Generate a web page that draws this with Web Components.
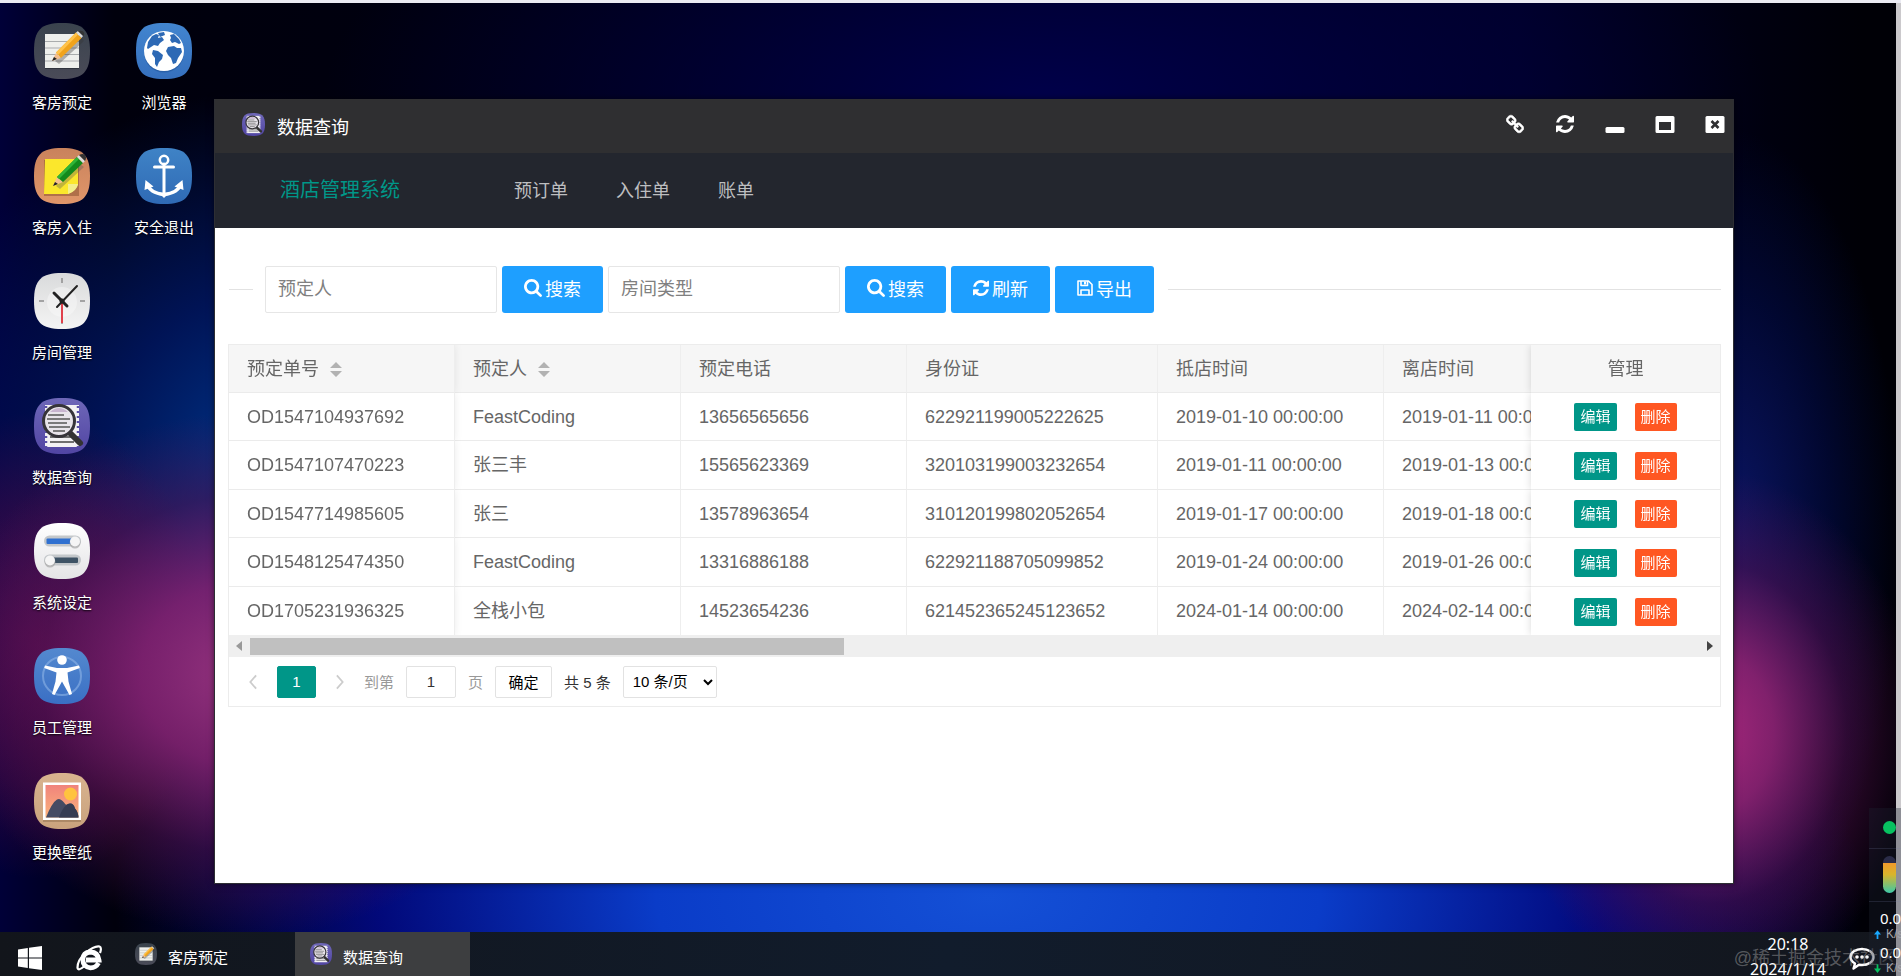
<!DOCTYPE html>
<html lang="zh-CN">
<head>
<meta charset="utf-8">
<title>数据查询</title>
<style>
  html, body {
    height: 100%;
    margin: 0;
  }

  body {
    overflow: hidden;
    font-family: "Liberation Sans", "Noto Sans CJK SC", sans-serif;
    font-size: 15px;
  }
</style>
</head>
<body>
<desk-top>
  <desk-shortcut icon="notes">客房预定</desk-shortcut>
  <desk-shortcut icon="sticky">客房入住</desk-shortcut>
  <desk-shortcut icon="clock">房间管理</desk-shortcut>
  <desk-shortcut icon="query">数据查询</desk-shortcut>
  <desk-shortcut icon="switches">系统设定</desk-shortcut>
  <desk-shortcut icon="person">员工管理</desk-shortcut>
  <desk-shortcut icon="picture">更换壁纸</desk-shortcut>
  <desk-shortcut icon="globe">浏览器</desk-shortcut>
  <desk-shortcut icon="anchor">安全退出</desk-shortcut>

  <desk-window slot="windows" icon="query" caption="数据查询">
    <hotel-nav brand="酒店管理系统">
      <a href="#booking">预订单</a>
      <a href="#checkin">入住单</a>
      <a href="#bill">账单</a>
    </hotel-nav>
    <search-bar></search-bar>
    <order-table></order-table>
  </desk-window>

  <task-bar slot="taskbar">
    <task-item icon="notes">客房预定</task-item>
    <task-item icon="query" active>数据查询</task-item>
  </task-bar>
  <net-meter slot="overlay"></net-meter>
</desk-top>

<script>
// Rounded tile shared by all desktop icons.
const TILE = 'M28 0C49 0 56 7 56 28S49 56 28 56 0 49 0 28 7 0 28 0z';

const ICONS = {
  notes: ['0 0 56 56', `
    <defs><linearGradient id="g" x2="0" y2="1"><stop stop-color="#3a434d"/><stop offset="1" stop-color="#4a4b58"/></linearGradient></defs>
    <path d="${TILE}" fill="url(#g)"/>
    <path d="M11 12h34v34H11z" fill="#1c1f26" opacity=".5"/>
    <path d="M11 11h34v34H11z" fill="#eeefec"/>
    <path d="M11 18.500h34M11 25h34M11 31.500h34M11 38h34" stroke="#a9acad" stroke-width="1.200"/>
    <path d="M21 38l26-24 3 4-25 23z" fill="#333" opacity=".35"/>
    <path d="M18 38l4-8 5 5z" fill="#f3bd8e"/><path d="M18 38l2-4 3 2z" fill="#222"/>
    <path d="M22 29.500L42 9.500l5.500 5.500L27 35z" fill="#f0a31c"/>
    <path d="M22 29.500L42 9.500l2 2L24 32z" fill="#ffc24a"/>
    <path d="M42 9.500l2-1.500 5 5-1.500 2z" fill="#ddd"/><path d="M44 8q4-1 5.500 1t0 4z" fill="#333"/>`],
  sticky: ['0 0 56 56', `
    <defs><linearGradient id="g" x2="0" y2="1"><stop stop-color="#c9825c"/><stop offset="1" stop-color="#e0966a"/></linearGradient></defs>
    <path d="${TILE}" fill="url(#g)"/>
    <path d="M10 12h35v36H10z" fill="#6f3d1f" opacity=".4"/>
    <path d="M11 11h33v26q-4 7-10 9H10z" fill="#fbe72c"/>
    <path d="M34 36h10q-1 7-10 10z" fill="#f3ee8c"/>
    <path d="M22 38l24-22 4 3-24 22z" fill="#555" opacity=".35"/>
    <path d="M19 38l4-9 6 5z" fill="#f5c08f"/><path d="M19 38l2-4 3 2z" fill="#222"/>
    <path d="M23 29L43 9l6 6-20 19z" fill="#128a1c"/>
    <path d="M23 29L43 9l2 2-20 20z" fill="#2fb437"/>
    <path d="M43 9l2-2 6 6-2 2z" fill="#ddd"/><path d="M45 7q4-2 6 0t0 6z" fill="#333"/>`],
  clock: ['0 0 56 56', `
    <defs><linearGradient id="g" x2="0" y2="1"><stop stop-color="#d9dadb"/><stop offset="1" stop-color="#f4f4f4"/></linearGradient></defs>
    <path d="${TILE}" fill="url(#g)"/><circle cx="28" cy="29" r="15" fill="#fff" opacity=".35"/>
    <path d="M28 5v5M5 28h5M46 28h5M28 46v5" stroke="#8d8d8d" stroke-width="1.500"/>
    <path d="M28 27v23" stroke="#e0414c" stroke-width="2"/>
    <path d="M20 20l13 13" stroke="#222" stroke-width="3" stroke-linecap="round"/>
    <path d="M23 34L43 13" stroke="#222" stroke-width="2" stroke-linecap="round"/>
    <circle cx="28" cy="28" r="2.500" fill="#222"/>`],
  query: ['0 0 56 56', `
    <defs><linearGradient id="g" x2="0" y2="1"><stop stop-color="#6e67b8"/><stop offset="1" stop-color="#5145a3"/></linearGradient></defs>
    <path d="${TILE}" fill="url(#g)"/>
    <path d="M11 7h34v42H11z" fill="#f2f1f3"/>
    <path d="M12 8v41M44 8v41" stroke="#5a50a8" stroke-width="2.500" stroke-dasharray="2 3"/>
    <path d="M16 39h22M16 44h24" stroke="#444" stroke-width="1.500"/>
    <path d="M37 36l9 9" stroke="#333" stroke-width="6" stroke-linecap="round"/>
    <circle cx="25" cy="23" r="15.500" fill="#e8e4ea" stroke="#363439" stroke-width="3"/>
    <path d="M16 14q9-8 18 0z" fill="#c8b4cf"/>
    <path d="M14 17h16M13 21h23M14 25h19M15 29h21M19 33h12" stroke="#555" stroke-width="1.400"/>`],
  switches: ['0 0 56 56', `
    <defs><linearGradient id="g" x2="0" y2="1"><stop stop-color="#fff"/><stop offset="1" stop-color="#e4e4e6"/></linearGradient></defs>
    <path d="${TILE}" fill="url(#g)"/>
    <rect x="10" y="12.500" width="37" height="11" rx="5.500" fill="#c3c7ca"/>
    <rect x="12.500" y="15.500" width="28" height="5.500" rx="1" fill="#2f70d0"/>
    <rect x="10" y="31.500" width="37" height="11" rx="5.500" fill="#c3c7ca"/>
    <rect x="18" y="34.500" width="26" height="5.500" rx="1" fill="#3e5365"/>
    <circle cx="41" cy="20" r="5.500" fill="#999" opacity=".6"/><circle cx="41" cy="18.500" r="5" fill="#f5f5f5"/>
    <circle cx="16" cy="39" r="5.500" fill="#999" opacity=".6"/><circle cx="16" cy="37.500" r="5" fill="#f5f5f5"/>`],
  person: ['0 0 56 56', `
    <defs><linearGradient id="g" x2="0" y2="1"><stop stop-color="#5489cf"/><stop offset="1" stop-color="#3a6fc4"/></linearGradient></defs>
    <path d="${TILE}" fill="url(#g)"/>
    <circle cx="28" cy="28" r="19" fill="none" stroke="#8db4e6" stroke-width="2" opacity=".6"/>
    <circle cx="28" cy="12" r="4.800" fill="#fff"/>
    <path d="M11 17.500l12 2.500h10l12-2.500.800 2.500L33.500 24.500l1 9 3.500 12.500-2.500 1L28 33.500 20.500 47l-2.500-1 3.500-12.500 1-9L10.200 20z" fill="#fff"/>`],
  picture: ['0 0 56 56', `
    <defs>
      <linearGradient id="g" x2="0" y2="1"><stop stop-color="#d9b48f"/><stop offset="1" stop-color="#c9a27d"/></linearGradient>
      <linearGradient id="s" x2="0" y2="1"><stop stop-color="#f0837c"/><stop offset="1" stop-color="#fbb37b"/></linearGradient>
    </defs>
    <path d="${TILE}" fill="url(#g)"/>
    <path d="M9 11h38v38H9z" fill="#7d5e41" opacity=".4"/>
    <path d="M9 9.500h38V47H9z" fill="#fff"/><path d="M11.500 12h33v32.500h-33z" fill="url(#s)"/>
    <circle cx="36.500" cy="21" r="6.500" fill="#ffc33f"/>
    <path d="M12 44.500q6-15 11-18 3-2 7 3 2 3 3 2 6-3 8 4 3 3 3.500 9z" fill="#454b63"/>
    <path d="M25 44.500q3-9 8-13 6-3 8 4 3 3 3.500 9z" fill="#363c52"/>`],
  globe: ['0 0 56 56', `
    <defs><linearGradient id="g" x2="0" y2="1"><stop stop-color="#4285cf"/><stop offset="1" stop-color="#3670be"/></linearGradient></defs>
    <path d="${TILE}" fill="url(#g)"/>
    <circle cx="28" cy="29.500" r="20" fill="#1d4f94" opacity=".5"/>
    <circle cx="28" cy="28" r="20" fill="#fff"/>
    <path d="M12 19l4-6 4-2 3 1-1 3 4-1 2 3-4 3-2 3-4-1-3 2-3 2-1-1zM22 10l6-1 1 3-5 2zM17 27l5 1 5 4-1 4-3 3-2 5-2-3v-6l-3-4zM34 12l4-1 5 5 2 4-2 1-4-2-3 1-2-3 1-2zM32 24l6-1 3 2 4 0 1 4-4 6-2 5-3 1-2-6-3-3-2-4z" fill="#2d69b5"/>`],
  anchor: ['0 0 56 56', `
    <defs><linearGradient id="g" x2="0" y2="1"><stop stop-color="#3f83c6"/><stop offset="1" stop-color="#2f6ab5"/></linearGradient></defs>
    <path d="${TILE}" fill="url(#g)"/>
    <circle cx="28" cy="12" r="4.200" fill="none" stroke="#fff" stroke-width="2.500"/>
    <path d="M28 16v30M18.500 19h19" stroke="#fff" stroke-width="3" stroke-linecap="round"/>
    <path d="M11 36q3 9 17 10.500Q42 45 45 36" fill="none" stroke="#fff" stroke-width="3.500"/>
    <path d="M8.500 42L9.500 32l8 6.500zM47.500 42l-1-10-8 6.500zM24 46l4 4 4-4z" fill="#fff"/>`],
  search: ['0 0 1664 1664', '<path d="M1152 704q0-185-131.500-316.500t-316.500-131.500-316.500 131.500-131.500 316.500 131.500 316.500 316.500 131.500 316.500-131.500 131.500-316.500zm512 832q0 52-38 90t-90 38q-54 0-90-38l-343-342q-179 124-399 124-143 0-273.500-55.500t-225-150-150-225-55.500-273.500 55.500-273.500 150-225 225-150 273.500-55.500 273.500 55.500 225 150 150 225 55.500 273.500q0 220-124 399l343 343q37 37 37 90z"/>'],
  refresh: ['0 0 1536 1536', '<path d="M1511 928q0 5-1 7-64 268-268 434.500t-478 166.500q-146 0-282.500-55t-243.500-157l-129 129q-19 19-45 19t-45-19-19-45v-448q0-26 19-45t45-19h448q26 0 45 19t19 45-19 45l-137 137q71 66 161 102t187 36q134 0 250-65t186-179q11-17 53-117 8-23 30-23h192q13 0 22.500 9.500t9.500 22.500zm25-800v448q0 26-19 45t-45 19h-448q-26 0-45-19t-19-45 19-45l138-138q-148-137-349-137-134 0-250 65t-186 179q-11 17-53 117-8 23-30 23h-199q-13 0-22.500-9.500t-9.500-22.500v-7q65-268 270-434.500t480-166.500q146 0 284 55.500t245 156.500l130-129q19-19 45-19t45 19 19 45z"/>'],
  save: ['0 0 16 16', '<path d="M1 1h10.500L15 4.500V15H1zM4 15v-5h8v5M4 1v4.500h6.500V1" fill="none" stroke="currentColor" stroke-width="1.600" stroke-linejoin="round"/><path d="M7 1.500h2v3H7z"/>'],
  link: ['0 0 1664 1664', '<path stroke="currentColor" stroke-width="50" d="M1456 1216q0-40-28-68l-208-208q-28-28-68-28-42 0-72 32 3 3 19 18.500t21.500 21.500 15 19 13 25.500 3.500 27.500q0 40-28 68t-68 28q-15 0-27.500-3.500t-25.500-13-19-15-21.500-21.500-18.500-19q-33 31-33 73 0 40 28 68l206 207q27 27 68 27 40 0 68-26l147-146q28-28 28-67zm-703-705q0-40-28-68l-206-207q-28-28-68-28-39 0-68 27l-147 146q-28 28-28 67 0 40 28 68l208 208q27 27 68 27 42 0 72-31-3-3-19-18.500t-21.500-21.500-15-19-13-25.500-3.500-27.500q0-40 28-68t68-28q15 0 27.500 3.500t25.500 13 19 15 21.500 21.500 18.500 19q33-31 33-73zm895 705q0 120-85 203l-147 146q-83 83-203 83-121 0-204-85l-206-207q-83-83-83-203 0-123 88-209l-88-88q-86 88-208 88-120 0-204-84l-208-208q-84-84-84-204t85-203l147-146q83-83 203-83 121 0 204 85l206 207q83 83 83 203 0 123-88 209l88 88q86-88 208-88 120 0 204 84l208 208q84 84 84 204z"/>'],
  minimize: ['0 0 20 20', '<rect x="0.500" y="13" width="19" height="6" rx="1.500"/>'],
  maximize: ['0 0 20 20', '<path fill-rule="evenodd" d="M2 2h16Q19.500 2 19.500 3.500v14q0 1.500-1.500 1.500H2Q.5 19 .5 17.500v-14Q.5 2 2 2zM4 8v8h12V8z"/>'],
  close: ['0 0 20 20', '<rect x="0.500" y="2" width="19" height="17" rx="1.500"/><path d="M6.500 7l7 7M13.500 7l-7 7" stroke="#2f2f31" stroke-width="2.600"/>'],
  windows: ['0 0 24 24', '<path d="M0 3.400L9.800 2v9.500H0zM11 1.800L24 0v11.500H11zM0 12.500h9.800V22L0 20.600zM11 12.500h13V24l-13-1.800z"/>'],
  explorer: ['0 0 26 26', `
    <path d="M22.500 18Q20 22.800 14.500 22.800 7 22 6.800 14.500 7 7.500 14.500 7q7.500.5 8.500 8H10" fill="none" stroke="currentColor" stroke-width="4.800"/>
    <path d="M8 21.500Q2 26.500 1.500 22.500 1.500 15 9.500 8 18.500.5 23.500 1.500q2.500 1 .5 6.500" fill="none" stroke="currentColor" stroke-width="2.200"/>`],
  chat: ['0 0 26 24', `
    <path d="M13 2C6.500 2 1.500 5.500 1.500 10c0 2.700 1.800 5 4.500 6.500L4.500 21.500 10 17.700l3 .300c6.500 0 11.500-3.500 11.500-8S19.500 2 13 2z" fill="none" stroke="currentColor" stroke-width="2.400" stroke-linejoin="round"/>
    <circle cx="8" cy="10" r="1.800"/><circle cx="13" cy="10" r="1.800"/><circle cx="18" cy="10" r="1.800"/>`],
  prev: ['0 0 10 18', '<path d="M8.500 1.500L2 9l6.500 7.500" fill="none" stroke="currentColor" stroke-width="2"/>'],
  next: ['0 0 10 18', '<path d="M1.500 1.500L8 9l-6.500 7.500" fill="none" stroke="currentColor" stroke-width="2"/>'],
  sort: ['0 0 12 16', '<path d="M6 1l6 6H0zM0 10h12l-6 6z"/>'],
  left: ['0 0 6 10', '<path d="M6 0v10L0 5z"/>'],
  right: ['0 0 6 10', '<path d="M0 0v10l6-5z"/>'],
  up: ['0 0 8 10', '<path d="M4 0l4 5H5v5H3V5H0z"/>'],
  down: ['0 0 8 10', '<path d="M4 10l4-5H5V0H3v5H0z"/>'],
};

class UiIcon extends HTMLElement {
  constructor() {
    super();
    this.attachShadow({mode: 'open'});
  }

  connectedCallback() {
    const [box, body] = ICONS[this.getAttribute('name')];
    this.shadowRoot.innerHTML = `
      <style>
        :host { display: block; flex: none; width: 16px; height: 16px; }
        svg { display: block; width: 100%; height: 100%; fill: currentColor; }
      </style>
      <svg viewBox="${box}" aria-hidden="true">${body}</svg>
    `;
  }
}

class DeskTop extends HTMLElement {
  constructor() {
    super();
    this.attachShadow({mode: 'open'}).innerHTML = `
      <style>
        :host {
          position: relative;
          display: flex;
          flex-direction: column;
          box-sizing: border-box;
          height: 100vh;
          padding-right: 5px;
          overflow: hidden;
          border-top: 3px solid #ebebf3;
          background:
            linear-gradient(#cbc9cc, #cbc9cc) right / 5px 100% no-repeat,
            radial-gradient(ellipse 11% 27% at 90% 75%, #a8287c 0%, rgba(150, 36, 116, .85) 30%, rgba(90, 16, 80, .5) 65%, transparent 100%),
            radial-gradient(ellipse 16% 27% at 13% 69%, #98347f 0%, rgba(135, 35, 115, .85) 35%, rgba(90, 20, 85, .5) 68%, transparent 100%),
            radial-gradient(ellipse 9% 24% at 2% 66%, rgba(110, 12, 80, .7) 0%, rgba(90, 10, 70, .4) 60%, transparent 100%),
            radial-gradient(ellipse 9% 42% at 91% 55%, rgba(12, 24, 110, .9) 0%, rgba(2, 12, 72, .6) 60%, transparent 100%),
            radial-gradient(ellipse 19% 38% at 14% 47%, #003488 0%, rgba(0, 26, 110, .75) 45%, transparent 100%),
            radial-gradient(ellipse 46% 42% at 52% 92%, #1450d6 0%, #0a3cc8 38%, rgba(2, 10, 140, .85) 70%, transparent 100%),
            radial-gradient(ellipse 38% 30% at 55% 10%, #00004a 0%, transparent 100%),
            linear-gradient(90deg, #000038 0%, #00000c 6%, #000014 50%, #000024 80%, #000006 98%);
        }
        .icons {
          display: flex;
          flex: 1;
          flex-flow: column wrap;
          align-content: flex-start;
          min-height: 0;
          padding: 20px 11px 0;
        }
      </style>
      <main class="icons"><slot></slot></main>
      <slot name="windows"></slot>
      <slot name="taskbar"></slot>
      <slot name="overlay"></slot>
    `;
  }
}

class DeskShortcut extends HTMLElement {
  constructor() {
    super();
    this.attachShadow({mode: 'open'}).innerHTML = `
      <style>
        :host { display: block; width: 102px; height: 125px; }
        button {
          display: flex;
          flex-direction: column;
          align-items: center;
          gap: 12px;
          width: 100%;
          padding: 0;
          border: 0;
          background: none;
          color: #fff;
          font: 15px/22px "Noto Sans CJK SC", sans-serif;
          text-shadow: 0 1px 2px #000;
        }
        ui-icon { width: 56px; height: 56px; }
      </style>
      <button type="button"><ui-icon name="${this.getAttribute('icon')}"></ui-icon><span><slot></slot></span></button>
    `;
  }
}

class DeskWindow extends HTMLElement {
  constructor() {
    super();
    const tools = [['link', '链接'], ['refresh', '刷新'], ['minimize', '最小化'], ['maximize', '最大化'], ['close', '关闭']];
    this.attachShadow({mode: 'open'}).innerHTML = `
      <style>
        :host {
          position: absolute;
          top: 96px;
          right: 167px;
          bottom: 92px;
          left: 214px;
          display: flex;
          flex-direction: column;
          border: 1px solid #2d2e33;
          border-top: 0;
          background: #fff;
          box-shadow: 0 0 6px rgba(0, 0, 0, .5);
        }
        header {
          display: flex;
          align-items: center;
          gap: 12px;
          height: 54px;
          padding: 0 8px 0 27px;
          background: #2f2f31;
          color: #fff;
        }
        header > ui-icon { width: 23px; height: 23px; margin-bottom: 4px; }
        h1 { flex: 1; margin: 0; font-size: 18px; font-weight: 400; }
        .tools { display: flex; gap: 30px; margin-bottom: 5px; }
        button { padding: 0; border: 0; background: none; color: #fff; }
        .tools ui-icon { width: 20px; height: 20px; }
        .tools ui-icon[name=refresh], .tools ui-icon[name=link] { width: 18px; margin: 0 1px; }
      </style>
      <header>
        <ui-icon name="${this.getAttribute('icon')}"></ui-icon>
        <h1>${this.getAttribute('caption')}</h1>
        <div class="tools">
          ${tools.map(([icon, label]) => `<button type="button" aria-label="${label}"><ui-icon name="${icon}"></ui-icon></button>`).join('')}
        </div>
      </header>
      <slot></slot>
    `;
  }
}

class HotelNav extends HTMLElement {
  constructor() {
    super();
    this.attachShadow({mode: 'open'}).innerHTML = `
      <style>
        :host { display: block; background: #23262e; }
        nav { display: flex; align-items: center; gap: 48px; box-sizing: border-box; height: 75px; padding: 0 65px 4px; }
        strong { margin-right: 66px; color: #009688; font-size: 20px; font-weight: 400; }
        ::slotted(a) { color: #bdbec0; font-size: 18px; text-decoration: none; }
      </style>
      <nav><strong>${this.getAttribute('brand')}</strong><slot></slot></nav>
    `;
  }
}

class SearchBar extends HTMLElement {
  constructor() {
    super();
    this.attachShadow({mode: 'open'}).innerHTML = `
      <style>
        :host { display: block; padding: 38px 12px 31px 14px; }
        form { display: flex; align-items: center; gap: 12px; }
        .rule { flex: 1; height: 1px; background: #e2e2e2; }
        .rule:first-child { flex: 0 0 24px; }
        .fields { display: flex; gap: 5px; margin-right: 2px; }
        input {
          box-sizing: border-box;
          width: 232px;
          height: 47px;
          padding: 0 12px;
          border: 1px solid #e6e6e6;
          border-radius: 2px;
          font: inherit;
          font-size: 18px;
        }
        input::placeholder { color: #808080; }
        button {
          display: flex;
          align-items: center;
          gap: 3px;
          box-sizing: border-box;
          height: 47px;
          padding: 0 22px 3px;
          border: 0;
          border-radius: 3px;
          background: #1e9fff;
          color: #fff;
          font: inherit;
          font-size: 18px;
        }
        ui-icon { width: 18px; height: 18px; }
        ui-icon.small { width: 16px; height: 16px; }
      </style>
      <form>
        <span class="rule"></span>
        <div class="fields">
          <input type="text" placeholder="预定人" aria-label="预定人">
          <button type="button"><ui-icon name="search"></ui-icon>搜索</button>
          <input type="text" placeholder="房间类型" aria-label="房间类型">
          <button type="button"><ui-icon name="search"></ui-icon>搜索</button>
          <button type="button"><ui-icon class="small" name="refresh"></ui-icon>刷新</button>
          <button type="button"><ui-icon class="small" name="save"></ui-icon>导出</button>
        </div>
        <span class="rule"></span>
      </form>
    `;
  }
}

const ORDERS = [
  ['OD1547104937692', 'FeastCoding', '13656565656', '622921199005222625', '2019-01-10 00:00:00', '2019-01-11 00:00:00'],
  ['OD1547107470223', '张三丰', '15565623369', '320103199003232654', '2019-01-11 00:00:00', '2019-01-13 00:00:00'],
  ['OD1547714985605', '张三', '13578963654', '310120199802052654', '2019-01-17 00:00:00', '2019-01-18 00:00:00'],
  ['OD1548125474350', 'FeastCoding', '13316886188', '622921188705099852', '2019-01-24 00:00:00', '2019-01-26 00:00:00'],
  ['OD1705231936325', '全栈小包', '14523654236', '621452365245123652', '2024-01-14 00:00:00', '2024-02-14 00:00:00'],
];

class OrderTable extends HTMLElement {
  constructor() {
    super();
    const rows = ORDERS.map(order => `
      <tr>
        ${order.map(value => `<td>${value}</td>`).join('')}
        <td><div class="ops"><button type="button">编辑</button><button type="button" class="danger">删除</button></div></td>
      </tr>`).join('');

    this.attachShadow({mode: 'open'}).innerHTML = `
      <style>
        :host { display: block; margin: 0 12px 0 13px; border: 1px solid #ececec; color: #666; }
        .view { overflow: hidden; }
        table { width: 100%; min-width: 1570px; table-layout: fixed; border-collapse: separate; border-spacing: 0; }
        col { width: 226px; }
        col.wide { width: 251px; }
        col.ops-col { width: 189px; }
        th, td {
          box-sizing: border-box;
          height: 48px;
          padding: 0 18px;
          border-right: 1px solid #eee;
          border-bottom: 1px solid #ebebeb;
          background: #fff;
          font-size: 18px;
          font-weight: 400;
          line-height: 24px;
          text-align: left;
          white-space: nowrap;
        }
        th { background: #f6f6f6; }
        tr:nth-child(even) td { height: 49px; }
        tbody tr:last-child td { border-bottom: 0; }
        th:first-child, td:first-child {
          position: sticky;
          left: 0;
          z-index: 1;
          box-shadow: 0 0 8px rgba(0, 0, 0, .08);
          clip-path: inset(0 -8px 0 0);
        }
        th:last-child, td:last-child {
          position: sticky;
          right: 0;
          z-index: 1;
          border-right: 0;
          box-shadow: 0 0 8px rgba(0, 0, 0, .15);
          clip-path: inset(0 0 0 -8px);
          text-align: center;
        }
        .sort { display: flex; align-items: center; gap: 11px; }
        .sort ui-icon { width: 12px; color: #b2b2b2; }
        .ops { display: flex; justify-content: center; gap: 18px; padding-top: 1px; }
        .ops button {
          height: 28px;
          padding: 0 6px;
          border: 0;
          border-radius: 2px;
          background: #009688;
          color: #fff;
          font: inherit;
          font-size: 15px;
          line-height: 24px;
        }
        .ops .danger { background: #ff5722; }
        .bar { display: flex; align-items: center; height: 22px; padding: 0 7px; background: #efefef; }
        .bar ui-icon { width: 6px; height: 10px; color: #999; }
        .bar ui-icon:last-child { color: #444; }
        .track { flex: 1; margin: 0 8px; }
        .thumb { width: 41%; height: 17px; background: #c0c0c0; }
      </style>
      <div class="view">
        <table>
          <colgroup><col><col><col><col class="wide"><col><col><col class="ops-col"></colgroup>
          <thead>
            <tr>
              <th><div class="sort">预定单号<ui-icon name="sort"></ui-icon></div></th>
              <th><div class="sort">预定人<ui-icon name="sort"></ui-icon></div></th>
              <th>预定电话</th>
              <th>身份证</th>
              <th>抵店时间</th>
              <th>离店时间</th>
              <th>管理</th>
            </tr>
          </thead>
          <tbody>${rows}</tbody>
        </table>
      </div>
      <div class="bar">
        <ui-icon name="left"></ui-icon>
        <div class="track"><div class="thumb"></div></div>
        <ui-icon name="right"></ui-icon>
      </div>
      <table-pager></table-pager>
    `;
  }
}

class TablePager extends HTMLElement {
  constructor() {
    super();
    this.attachShadow({mode: 'open'}).innerHTML = `
      <style>
        :host {
          display: flex;
          align-items: center;
          gap: 12px;
          height: 49px;
          padding: 0 6px;
          color: #333;
          font-size: 15px;
        }
        .pages, label { display: flex; align-items: center; color: #999; }
        .pages { gap: 6px; }
        label { gap: 12px; }
        button, input, select {
          box-sizing: border-box;
          height: 32px;
          border: 1px solid #e2e2e2;
          border-radius: 2px;
          background-color: #fff;
          color: #000;
          font: inherit;
        }
        .arrow { display: flex; justify-content: center; align-items: center; width: 36px; padding: 0; border: 0; color: #ccc; }
        .arrow ui-icon { width: 10px; }
        .current { width: 39px; padding: 0; border-color: #009688; background: #009688; color: #fff; }
        input { width: 50px; padding: 0; text-align: center; color: #333; }
        .go { width: 57px; padding: 0; }
        select { width: 94px; padding: 0 5px; }
      </style>
      <div class="pages">
        <button type="button" class="arrow" aria-label="上一页"><ui-icon name="prev"></ui-icon></button>
        <button type="button" class="current">1</button>
        <button type="button" class="arrow" aria-label="下一页"><ui-icon name="next"></ui-icon></button>
        <label>到第 <input type="text" value="1"> 页</label>
      </div>
      <button type="button" class="go">确定</button>
      <span>共 5 条</span>
      <select aria-label="每页条数"><option>10 条/页</option></select>
    `;
  }
}

class TaskBar extends HTMLElement {
  constructor() {
    super();
    this.attachShadow({mode: 'open'}).innerHTML = `
      <style>
        :host {
          position: relative;
          display: flex;
          height: 44px;
          background: linear-gradient(90deg, #12151b, #111c2c 50%, #13161d);
          color: #fff;
        }
        .launch { display: flex; justify-content: center; align-items: center; width: 59px; padding: 7px 0 0; border: 0; background: none; color: #fff; }
        .launch ui-icon { width: 24px; height: 24px; }
        .launch ui-icon.large { width: 26px; height: 26px; }
        .tasks { display: flex; flex: 1; padding-left: 2px; }
        time { width: 96px; font: 16px/25px "Noto Sans", sans-serif; text-align: center; white-space: nowrap; }
        .chat { display: flex; align-items: center; width: 47px; margin-left: 13px; padding: 10px 0 0; border: 0; background: none; color: #fff; }
        .chat ui-icon { width: 26px; height: 24px; }
        .mark {
          position: absolute;
          right: 0;
          bottom: 4px;
          color: rgba(190, 190, 190, .4);
          font-size: 18px;
          line-height: 28px;
        }
      </style>
      <button type="button" class="launch" aria-label="开始"><ui-icon name="windows"></ui-icon></button>
      <button type="button" class="launch" aria-label="浏览器"><ui-icon class="large" name="explorer"></ui-icon></button>
      <div class="tasks"><slot></slot></div>
      <span class="mark">@稀土掘金技术社区</span>
      <time datetime="2024-01-14T20:18">20:18<br>2024/1/14</time>
      <button type="button" class="chat" aria-label="消息"><ui-icon name="chat"></ui-icon></button>
    `;
  }
}

class TaskItem extends HTMLElement {
  constructor() {
    super();
    this.attachShadow({mode: 'open'}).innerHTML = `
      <style>
        :host { display: flex; width: 175px; }
        :host([active]) { background: #3d3e40; }
        button {
          display: flex;
          flex: 1;
          align-items: center;
          gap: 11px;
          padding: 5px 15px 0;
          border: 0;
          background: none;
          color: #fff;
          font: 15px/22px "Noto Sans CJK SC", sans-serif;
        }
        ui-icon { width: 22px; height: 22px; margin-bottom: 6px; }
      </style>
      <button type="button"><ui-icon name="${this.getAttribute('icon')}"></ui-icon><span><slot></slot></span></button>
    `;
  }
}

// Floating speed widget docked at the right edge, over desktop and taskbar.
class NetMeter extends HTMLElement {
  constructor() {
    super();
    this.attachShadow({mode: 'open'}).innerHTML = `
      <style>
        :host {
          position: absolute;
          right: 0;
          bottom: 0;
          display: flex;
          flex-direction: column;
          width: 32px;
          height: 168px;
          overflow: hidden;
          background: rgba(30, 34, 50, .35);
          color: #fff;
        }
        .cell { display: flex; justify-content: center; align-items: center; padding-left: 8px; border-bottom: 1px solid rgba(120, 130, 170, .2); }
        .status { height: 40px; }
        .level { height: 53px; }
        .dot { width: 13px; height: 13px; border-radius: 50%; background: #07c160; }
        .pill { width: 13px; height: 37px; border-radius: 7px; background: linear-gradient(#2a2c48 18%, #f09a2c 19%, #d8b52c 50%, #3cc9a8); }
        .rate { display: flex; flex-direction: column; height: 34px; padding-left: 5px; white-space: nowrap; }
        b { padding-left: 6px; font: 15px/20px "Noto Sans", sans-serif; }
        .unit { display: flex; align-items: center; gap: 5px; color: #a5a6ac; font-size: 12px; line-height: 12px; }
        .unit ui-icon { width: 7px; height: 9px; color: #18a8ff; }
        .unit ui-icon[name=down] { color: #07c160; }
        .rates { padding-top: 6px; }
      </style>
      <div class="cell status"><span class="dot"></span></div>
      <div class="cell level"><span class="pill"></span></div>
      <div class="rates">
        <div class="rate"><b>0.0</b><span class="unit"><ui-icon name="up"></ui-icon>K/s</span></div>
        <div class="rate"><b>0.0</b><span class="unit"><ui-icon name="down"></ui-icon>K/s</span></div>
      </div>
    `;
  }
}

customElements.define('ui-icon', UiIcon);
customElements.define('desk-top', DeskTop);
customElements.define('desk-shortcut', DeskShortcut);
customElements.define('desk-window', DeskWindow);
customElements.define('hotel-nav', HotelNav);
customElements.define('search-bar', SearchBar);
customElements.define('table-pager', TablePager);
customElements.define('order-table', OrderTable);
customElements.define('task-bar', TaskBar);
customElements.define('task-item', TaskItem);
customElements.define('net-meter', NetMeter);
</script>
</body>
</html>
